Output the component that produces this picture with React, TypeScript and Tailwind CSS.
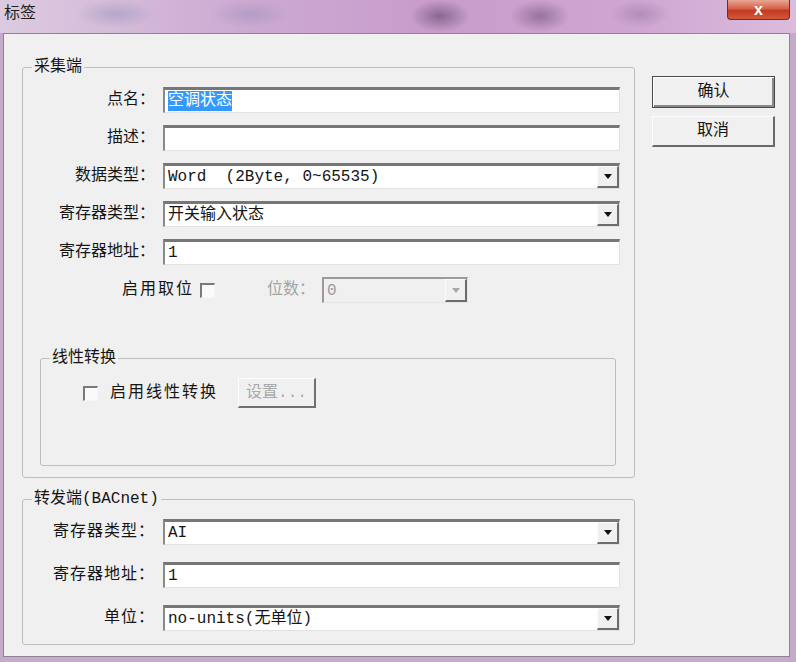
import { FC, ReactNode } from "react";

const Arrow: FC<{ disabled?: boolean }> = ({ disabled }) => (
    <svg width="8" height="5" viewBox="0 0 8 5">
        <path d="M0 0H8L4 5Z" fill={disabled ? "#a8a8a8" : "#111"} />
    </svg>
);

const DropButton: FC<{ disabled?: boolean }> = ({ disabled }) => (
    <div className="flex h-full w-[22px] shrink-0 items-center justify-center border-t border-l border-t-[#fbfbfb] border-l-[#fbfbfb] border-r-2 border-b-2 border-r-[#6c6c6c] border-b-[#6c6c6c] bg-[#f0f0f0]">
        <Arrow disabled={disabled} />
    </div>
);

const Field: FC<{ children?: ReactNode; combo?: boolean; className?: string }> = ({ children, combo, className }) => (
    <div
        className={`flex h-[26px] items-stretch border-t-[3px] border-l-2 border-t-[#767676] border-l-[#8a8a8a] border-b border-r border-b-[#e2e2e2] border-r-[#e2e2e2] bg-white ${className ?? ""}`}
    >
        <div className="flex flex-1 items-center overflow-hidden whitespace-pre pl-[3px]">{children}</div>
        {combo && <DropButton />}
    </div>
);

const Row: FC<{ label: string; children: ReactNode; wide?: boolean }> = ({ label, children, wide }) => (
    <div className="flex items-center">
        <div className={`w-[132px] shrink-0 text-right ${wide ? "tracking-[1px]" : ""}`}>{label}</div>
        <div className="ml-[8px] w-[457px]">{children}</div>
    </div>
);

const Check: FC = () => (
    <div className="h-[15px] w-[15px] shrink-0 border-t-2 border-l-2 border-t-[#7a7a7a] border-l-[#7a7a7a] border-b border-r border-b-[#f6f6f6] border-r-[#f6f6f6] bg-[#fafafa]" />
);

const App: FC = () => {
    return (
        <div className="flex h-[662px] w-[796px] flex-col overflow-hidden bg-[#c6aacb] font-['Liberation_Mono','Noto_Sans_CJK_SC',monospace] text-[16px] leading-[20px] text-[#151515]">
            {/* title bar */}
            <div className="flex h-[33px] shrink-0 items-start justify-between bg-[radial-gradient(ellipse_40px_14px_at_115px_14px,rgba(120,130,170,0.35),transparent),radial-gradient(ellipse_40px_14px_at_250px_14px,rgba(120,130,170,0.3),transparent),radial-gradient(ellipse_30px_16px_at_440px_16px,rgba(60,40,70,0.45),transparent),radial-gradient(ellipse_30px_16px_at_540px_16px,rgba(70,50,80,0.4),transparent),radial-gradient(ellipse_30px_14px_at_640px_14px,rgba(90,70,100,0.25),transparent),linear-gradient(90deg,#dccbe0_0%,#cdaad2_30%,#c89ccc_55%,#cfa6d2_80%,#dbbcdd_100%)]">
                <div className="pl-[4px] pt-[4px] text-[16px] leading-[20px] text-[#1e1e1e]">标签</div>
                <div className="mr-[6px] flex h-[20px] w-[63px] items-center justify-center rounded-b-[4px] border border-t-0 border-[#7a2a22] bg-[linear-gradient(180deg,#e9a695_0%,#d6624a_45%,#c23a22_55%,#d2583c_100%)] font-['Liberation_Sans',sans-serif] text-[16px] font-bold leading-[16px] text-white">
                    x
                </div>
            </div>

            {/* client */}
            <div className="mb-[5px] ml-[3px] mr-[6px] flex flex-1 border border-[#8a8494] bg-[#f0f0f0]">
                <div className="ml-[18px] mt-[23px] flex w-[613px] flex-col">
                    <fieldset className="rounded-[3px] border border-[#bdbdbd] pb-[11px]">
                        <legend className="ml-[9px] px-[2px]">采集端</legend>
                        <div className="mt-[10px] flex flex-col gap-[12px]">
                            <Row label="点名：">
                                <Field>
                                    <span className="bg-[#3399ff] text-white">空调状态</span>
                                </Field>
                            </Row>
                            <Row label="描述：">
                                <Field />
                            </Row>
                            <Row label="数据类型：">
                                <Field combo>{"Word  (2Byte, 0~65535)"}</Field>
                            </Row>
                            <Row label="寄存器类型：">
                                <Field combo>开关输入状态</Field>
                            </Row>
                            <Row label="寄存器地址：">
                                <Field>1</Field>
                            </Row>
                            <div className="flex h-[26px] items-center pl-[99px]">
                                <span className="tracking-[2px]">启用取位</span>
                                <div className="ml-[6px]">
                                    <Check />
                                </div>
                                <span className="ml-[52px] text-[#a3a3a3]">位数：</span>
                                <div className="ml-[7px] flex h-[26px] w-[146px] items-stretch border-t-2 border-l-2 border-t-[#9a9a9a] border-l-[#9a9a9a] border-b border-r border-b-[#e6e6e6] border-r-[#e6e6e6] bg-[#f0f0f0]">
                                    <div className="flex flex-1 items-center pl-[3px] text-[#9a9a9a]">0</div>
                                    <DropButton disabled />
                                </div>
                            </div>
                        </div>

                        <fieldset className="ml-[17px] mr-[18px] mt-[45px] h-[118px] rounded-[3px] border border-[#bdbdbd]">
                            <legend className="ml-[9px] px-[2px]">线性转换</legend>
                            <div className="mt-[10px] flex items-center pl-[42px]">
                                <Check />
                                <span className="ml-[12px] tracking-[2px]">启用线性转换</span>
                                <div className="ml-[20px] flex h-[30px] w-[78px] items-center justify-center border-t border-l border-t-[#fdfdfd] border-l-[#fdfdfd] border-r-2 border-b-2 border-r-[#707070] border-b-[#707070] bg-[#f0f0f0] text-[#a9a9a9]">
                                    设置...
                                </div>
                            </div>
                        </fieldset>
                    </fieldset>

                    <fieldset className="mt-[11px] rounded-[3px] border border-[#bdbdbd] pb-[13px]">
                        <legend className="ml-[9px] px-[2px]">转发端(BACnet)</legend>
                        <div className="mt-[10px] flex flex-col gap-[17px]">
                            <Row label="寄存器类型：" wide>
                                <Field combo>AI</Field>
                            </Row>
                            <Row label="寄存器地址：" wide>
                                <Field>1</Field>
                            </Row>
                            <Row label="单位：" wide>
                                <Field combo>no-units(无单位)</Field>
                            </Row>
                        </div>
                    </fieldset>
                </div>

                <div className="ml-[17px] mt-[42px] flex w-[123px] flex-col gap-[8px]">
                    <div className="flex h-[32px] items-center justify-center border border-[#4a4a4a] bg-[#f0f0f0] shadow-[inset_1px_1px_0_#fff,inset_-2px_-2px_0_#8a8a8a]">
                        确认
                    </div>
                    <div className="flex h-[31px] items-center justify-center border-t border-l border-t-[#fdfdfd] border-l-[#fdfdfd] border-r-2 border-b-2 border-r-[#6a6a6a] border-b-[#6a6a6a] bg-[#f0f0f0]">
                        取消
                    </div>
                </div>
            </div>
        </div>
    );
};

export default App;
